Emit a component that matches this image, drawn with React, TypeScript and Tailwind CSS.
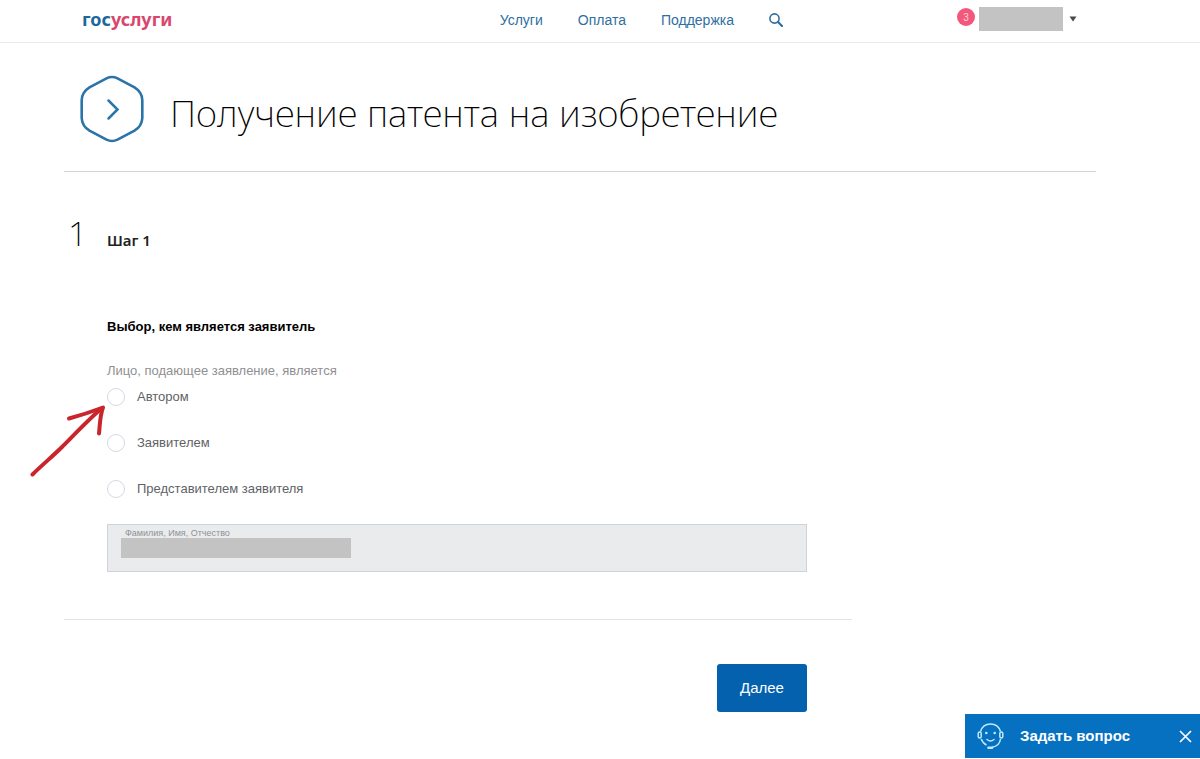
import { useState } from 'react'

const NAV_LINKS = ['Услуги', 'Оплата', 'Поддержка']

const APPLICANT_OPTIONS = [
  { value: 'author', label: 'Автором' },
  { value: 'applicant', label: 'Заявителем' },
  { value: 'agent', label: 'Представителем заявителя' },
]

function Header() {
  return (
    <header className="flex h-[43px] items-center border-b border-[#e9ebed] pr-[123px] pb-1 pl-[82px]">
      <a
        href="#"
        className="font-['Noto_Sans','Open_Sans',sans-serif] text-[18px] leading-5 font-bold text-[#1c679b]"
      >
        гос<span className="text-[#d8476d]">услуги</span>
      </a>
      <nav className="mt-0.5 ml-auto flex items-center gap-[35px] text-sm text-[#2f6f9f]">
        {NAV_LINKS.map((link) => (
          <a key={link} href="#" className="hover:underline">
            {link}
          </a>
        ))}
        <button type="button" aria-label="Поиск" className="cursor-pointer">
          <svg width="14" height="14" viewBox="0 0 14 14" fill="none" stroke="currentColor">
            <circle cx="5.5" cy="5.5" r="4.6" strokeWidth="1.6" />
            <path d="M9 9 13 13" strokeWidth="2.2" strokeLinecap="round" />
          </svg>
        </button>
      </nav>
      <div className="ml-[174px] flex items-center">
        <span className="mr-1 mb-1 flex size-[18px] items-center justify-center rounded-full bg-[#f2587c] text-[10px] text-[#ffd3dd]">
          3
        </span>
        <button type="button" aria-label="Профиль" className="flex cursor-pointer items-center gap-1.5">
          <span className="h-6 w-[84px] bg-[#c2c3c2]" />
          <svg width="8" height="6" viewBox="0 0 8 6" fill="#4a4a4a">
            <path d="M.5.5h7L4 5.5z" />
          </svg>
        </button>
      </div>
    </header>
  )
}

function HexIcon() {
  return (
    <svg width="64" height="68" viewBox="0 0 64 68" fill="none" stroke="#2a74a9" className="shrink-0">
      <path
        d="M26.5 3.3Q32 .6 37.5 3.3L54.5 12.3Q62 17 62.3 25V43Q62 51 54.5 55.7L37.5 64.7Q32 67.4 26.5 64.7L9.5 55.7Q2 51 1.7 43V25Q2 17 9.5 12.3Z"
        strokeWidth="2.6"
      />
      <path d="M28.5 25.5 37.5 34.5 28.5 43.5" strokeWidth="2.5" strokeLinecap="round" />
    </svg>
  )
}

function PointerArrow() {
  return (
    <svg
      width="80"
      height="76"
      viewBox="0 0 80 76"
      fill="none"
      stroke="#c9252c"
      strokeLinecap="round"
      strokeLinejoin="round"
      className="pointer-events-none absolute top-5 -left-[78px]"
    >
      <path d="M3.5 73.5C13 64 24 55 33 46 43 36 60 18 73 7" strokeWidth="4" />
      <path d="M40 17.5C51 14.5 62 11 74 6.500 71 14 71 23 70 32.5" strokeWidth="4" />
    </svg>
  )
}

function ChatWidget({ onClose }: { onClose: () => void }) {
  return (
    <div className="fixed right-0 bottom-px flex h-11 w-[235px] items-center bg-[#0571c0] pr-2 pl-3 text-white">
      <button type="button" className="flex cursor-pointer items-center gap-4 text-[15px] font-bold">
        <svg width="27" height="28" viewBox="0 0 27 28" fill="none" stroke="#bfe9fb" strokeWidth="1.5">
          <path d="M3.5 9.5C5 4.5 9 2 13.5 2s8.5 2.5 10 7.5" />
          <rect x="1.2" y="10" width="3" height="6" rx="1.5" />
          <rect x="22.8" y="10" width="3" height="6" rx="1.5" />
          <path d="M4.2 17c1.2 3 3 5 5.3 6M23.5 17c-.5 4.500-4 7.500-8.500 8.300" />
          <path d="M11.5 25.7h3.5" strokeWidth="2.6" strokeLinecap="round" />
          <path d="M10 17.5c2 1.600 5 1.600 7 0" strokeLinecap="round" />
          <circle cx="9.3" cy="11" r="1.3" fill="#bfe9fb" stroke="none" />
          <circle cx="17.7" cy="11" r="1.3" fill="#bfe9fb" stroke="none" />
        </svg>
        Задать вопрос
      </button>
      <button type="button" aria-label="Закрыть" className="ml-auto cursor-pointer" onClick={onClose}>
        <svg width="13" height="13" viewBox="0 0 13 13" fill="none" stroke="currentColor" strokeWidth="1.7">
          <path d="m1 1 11 11M12 1 1 12" />
        </svg>
      </button>
    </div>
  )
}

export default function App() {
  const [applicant, setApplicant] = useState('')
  const [chatOpen, setChatOpen] = useState(true)

  return (
    <div className="min-h-screen bg-white font-['Liberation_Sans',Arial,sans-serif]">
      <Header />

      <main className="pr-[104px] pl-16">
        <div className="flex items-center gap-[26px] border-b border-[#d2d3d4] pt-8 pb-7 pl-4">
          <HexIcon />
          <h1 className="mt-2 font-['Noto_Sans','Open_Sans',sans-serif] text-[37px] leading-[48px] font-extralight text-black">
            Получение патента на изобретение
          </h1>
        </div>

        <form
          className="max-w-[788px] pt-9 pr-[45px] pl-[43px]"
          onSubmit={(e) => e.preventDefault()}
        >
          <div className="-ml-[43px] flex items-baseline">
            <span className="w-[43px] pl-1 font-['Noto_Sans','Open_Sans',sans-serif] text-[34px] leading-[50px] font-extralight text-black">
              1
            </span>
            <h2 className="font-['Noto_Sans','Open_Sans',sans-serif] text-[15px] font-semibold text-[#222]">
              Шаг 1
            </h2>
          </div>

          <h3 className="mt-[59px] text-[13px] leading-5 font-bold text-black">
            Выбор, кем является заявитель
          </h3>

          <fieldset className="mt-6">
            <legend className="text-[13px] leading-5 text-[#8f9092]">
              Лицо, подающее заявление, является
            </legend>
            <div className="relative flex flex-col gap-[26px] pt-1.5">
              {APPLICANT_OPTIONS.map((option) => (
                <label
                  key={option.value}
                  className="flex h-5 cursor-pointer items-center gap-3 text-[13px] text-[#5f6266]"
                >
                  <input
                    type="radio"
                    name="applicant"
                    value={option.value}
                    checked={applicant === option.value}
                    onChange={() => setApplicant(option.value)}
                    className="size-[18px] appearance-none rounded-full border border-[#d5d9e4] bg-white checked:border-[5px] checked:border-[#0063b0]"
                  />
                  {option.label}
                </label>
              ))}
              <PointerArrow />
            </div>
          </fieldset>

          <div className="mt-[25px] h-12 border border-[#cfd4d9] bg-[#e9ebed] pt-[3px] pl-[13px]">
            <label htmlFor="fullName" className="block pl-1 text-[9px] leading-[10px] text-[#8f9295]">
              Фамилия, Имя, Отчество
            </label>
            <input id="fullName" readOnly className="block h-5 w-[230px] bg-[#c3c3c3] px-1 text-sm" />
          </div>

          <hr className="mt-[47px] -mr-[45px] -ml-[43px] border-[#e1e3e5]" />

          <div className="flex justify-end pt-11 pb-12">
            <button
              type="submit"
              className="h-12 w-[90px] cursor-pointer rounded-[3px] bg-[#0361ad] text-[15px] text-white"
            >
              Далее
            </button>
          </div>
        </form>
      </main>

      {chatOpen && <ChatWidget onClose={() => setChatOpen(false)} />}
    </div>
  )
}
